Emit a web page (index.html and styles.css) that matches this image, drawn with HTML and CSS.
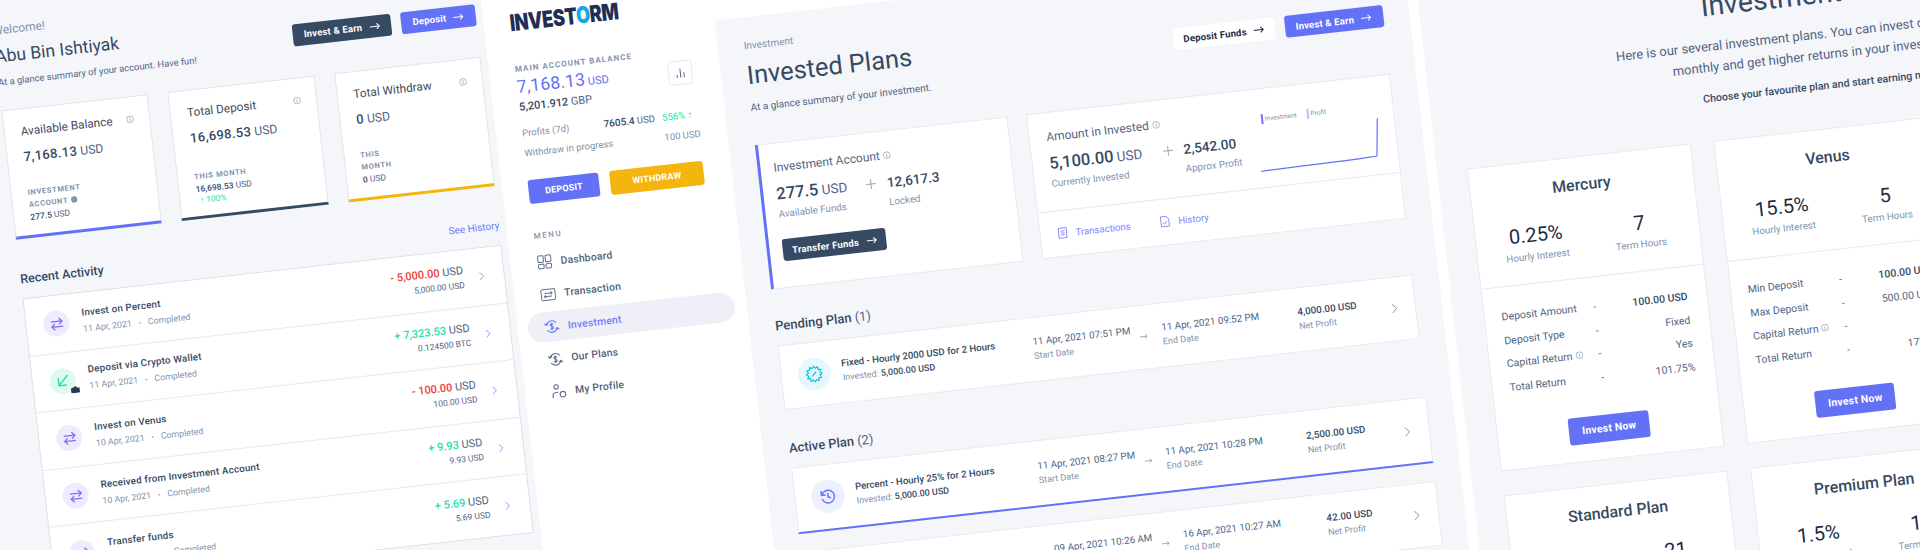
FILE: index.html
```html
<!DOCTYPE html>
<html lang="en">
<head>
<meta charset="utf-8">
<title>Investorm</title>
<link rel="stylesheet" href="styles.css">
</head>
<body>
<svg class="defs" width="0" height="0" aria-hidden="true">
  <symbol id="i-arrow" viewBox="0 0 12 8"><path d="M.5 4h10.5M8 1l3 3-3 3" fill="none" stroke="currentColor" stroke-width="1.1"/></symbol>
  <symbol id="i-info" viewBox="0 0 10 10"><circle cx="5" cy="5" r="4.2" fill="none" stroke="currentColor" stroke-width=".8"/><path d="M5 4.4v3M5 2.6v1" stroke="currentColor" stroke-width=".9"/></symbol>
  <symbol id="i-chev" viewBox="0 0 8 12"><path d="M1.5 1l5 5-5 5" fill="none" stroke="currentColor" stroke-width="1"/></symbol>
  <symbol id="i-swap" viewBox="0 0 14 14"><path d="M1.5 4.5h10.5M9 1.5l3 3-3 3M12.5 9.5H2M5 6.500l-3 3 3 3" fill="none" stroke="currentColor" stroke-width="1.200"/></symbol>
  <symbol id="i-money" viewBox="0 0 16 16"><path d="M2.600 6.200A5.800 5.800 0 0 1 12.800 4.600M13.400 9.800A5.800 5.800 0 0 1 3.200 11.400M.8 4.400l1.900 2 2-1.600M15.200 11.600l-1.900-2-2 1.600M9.600 5.900C9 5.200 6.700 5 6.600 6.500S9.700 7.700 9.600 9.300 7 10.800 6.300 10M8 4.300v7.400" fill="none" stroke="currentColor" stroke-width="1.100"/></symbol>
  <symbol id="i-clock" viewBox="0 0 16 16"><path d="M2 2.500v4h4M2.400 6.400A6 6 0 1 1 2.300 10M8 4.800v3.700l2.600 1.200" fill="none" stroke="currentColor" stroke-width="1.400"/></symbol>
</svg>

<div class="stage">

  <section class="dash">
    <header class="head">
      <div>
        <p class="muted-line">Welcome!</p>
        <h1 class="name">Abu Bin Ishtiyak</h1>
        <p class="summary">At a glance summary of your account. Have fun!</p>
      </div>
      <div class="actions">
        <a class="btn btn-dark btn-head">Invest &amp; Earn <svg class="btn-arrow"><use href="#i-arrow"/></svg></a>
        <a class="btn btn-blue btn-dep">Deposit <svg class="btn-arrow"><use href="#i-arrow"/></svg></a>
      </div>
    </header>

    <div class="tiles">
      <article class="tile tile-blue">
        <div class="tile-top"><h3>Available Balance</h3><svg class="tile-info"><use href="#i-info"/></svg></div>
        <p class="tile-val"><b>7,168.13</b> USD</p>
        <div class="tile-foot">
          <p class="tile-label narrow">Investment<br>Account <svg class="dot-info" viewBox="0 0 8 8"><circle cx="4" cy="4" r="3.600" fill="#8094ae"/></svg></p>
          <p class="tile-sub"><b>277.5</b> USD</p>
        </div>
      </article>
      <article class="tile tile-dark">
        <div class="tile-top"><h3>Total Deposit</h3><svg class="tile-info"><use href="#i-info"/></svg></div>
        <p class="tile-val"><b>16,698.53</b> USD</p>
        <div class="tile-foot">
          <p class="tile-label">This Month</p>
          <p class="tile-sub"><b>16,698.53</b> USD</p>
          <p class="tile-pct">↑ 100%</p>
        </div>
      </article>
      <article class="tile tile-yellow">
        <div class="tile-top"><h3>Total Withdraw</h3><svg class="tile-info"><use href="#i-info"/></svg></div>
        <p class="tile-val"><b>0</b> USD</p>
        <div class="tile-foot">
          <p class="tile-label">This<br>Month</p>
          <p class="tile-sub"><b>0</b> USD</p>
        </div>
      </article>
    </div>

    <div class="section-head">
      <h2>Recent Activity</h2>
      <a class="see">See History</a>
    </div>

    <div class="activity">
      <div class="act">
        <span class="ico ico-purple"><svg><use href="#i-swap"/></svg></span>
        <div class="act-main"><h4>Invest on Percent</h4><p>11 Apr, 2021<i>•</i><span>Completed</span></p></div>
        <div class="act-amt"><p class="amt"><b class="neg">- 5,000.00</b> USD</p><p class="amt-sub">5,000.00 USD</p></div>
        <svg class="act-chev"><use href="#i-chev"/></svg>
      </div>
      <div class="act">
        <span class="ico ico-green">
          <svg viewBox="0 0 14 14"><path d="M11.500 2L2.500 11M2.500 4v7.200h7.200" fill="none" stroke="currentColor" stroke-width="1.300"/></svg>
          <svg class="wallet" viewBox="0 0 10 8"><path d="M0 2.500L6 0l1 2h3v6H0z" fill="#2c3a52"/></svg>
        </span>
        <div class="act-main"><h4>Deposit via Crypto Wallet</h4><p>11 Apr, 2021<i>•</i><span>Completed</span></p></div>
        <div class="act-amt"><p class="amt"><b class="pos">+ 7,323.53</b> USD</p><p class="amt-sub">0.124500 BTC</p></div>
        <svg class="act-chev"><use href="#i-chev"/></svg>
      </div>
      <div class="act">
        <span class="ico ico-purple"><svg><use href="#i-swap"/></svg></span>
        <div class="act-main"><h4>Invest on Venus</h4><p>10 Apr, 2021<i>•</i><span>Completed</span></p></div>
        <div class="act-amt"><p class="amt"><b class="neg">- 100.00</b> USD</p><p class="amt-sub">100.00 USD</p></div>
        <svg class="act-chev"><use href="#i-chev"/></svg>
      </div>
      <div class="act">
        <span class="ico ico-purple"><svg><use href="#i-swap"/></svg></span>
        <div class="act-main"><h4>Received from Investment Account</h4><p>10 Apr, 2021<i>•</i><span>Completed</span></p></div>
        <div class="act-amt"><p class="amt"><b class="pos">+ 9.93</b> USD</p><p class="amt-sub">9.93 USD</p></div>
        <svg class="act-chev"><use href="#i-chev"/></svg>
      </div>
      <div class="act">
        <span class="ico ico-purple"><svg><use href="#i-swap"/></svg></span>
        <div class="act-main"><h4>Transfer funds</h4><p>10 Apr, 2021<i>•</i><span>Completed</span></p></div>
        <div class="act-amt"><p class="amt"><b class="pos">+ 5.69</b> USD</p><p class="amt-sub">5.69 USD</p></div>
        <svg class="act-chev"><use href="#i-chev"/></svg>
      </div>
    </div>
  </section>

  <aside class="side">
    <div class="logo"><span class="logo-word">INVEST<em>O</em>RM</span></div>
    <div class="bal">
      <div>
        <p class="bal-label">Main Account Balance</p>
        <p class="bal-main"><b>7,168.13</b> USD</p>
        <p class="bal-alt"><b>5,201.912</b> GBP</p>
      </div>
      <span class="bal-btn"><svg viewBox="0 0 12 12"><path d="M2.500 11V8M6 11V2M9.500 11V6" fill="none" stroke="#526484" stroke-width="1"/></svg></span>
    </div>
    <div class="bal-row bal-row-first">
      <span class="soft">Profits (7d)</span>
      <span class="profit"><b>7605.4</b> USD</span>
      <span class="gain">556% ↑</span>
    </div>
    <div class="bal-row">
      <span class="soft">Withdraw in progress</span>
      <span></span>
      <span class="soft right">100 USD</span>
    </div>
    <div class="side-btns">
      <a class="btn btn-blue btn-side btn-side-dep">Deposit</a>
      <a class="btn btn-yellow btn-side btn-side-wd">Withdraw</a>
    </div>
    <p class="menu-title">Menu</p>
    <nav class="menu">
      <a class="item">
        <svg viewBox="0 0 16 16"><g fill="none" stroke="currentColor" stroke-width="1"><rect x="1.500" y="1.500" width="5.500" height="6.500" rx="1"/><rect x="9" y="1.500" width="5.500" height="6.500" rx="1"/><rect x="1.500" y="10" width="5.500" height="4.500" rx="1"/><rect x="9" y="10" width="5.500" height="4.500" rx="1"/></g></svg>
        Dashboard</a>
      <a class="item">
        <svg viewBox="0 0 16 16"><g fill="none" stroke="currentColor" stroke-width="1"><rect x="1" y="2.500" width="14" height="11" rx="1.500"/><path d="M4.500 6.500h7.500M10.500 5l1.500 1.500L10.500 8M11.500 9.700H4M5.500 8.200L4 9.700l1.500 1.500"/></g></svg>
        Transaction</a>
      <a class="item item-on"><svg><use href="#i-money"/></svg>Investment</a>
      <a class="item"><svg><use href="#i-money"/></svg>Our Plans</a>
      <a class="item">
        <svg viewBox="0 0 16 16"><g fill="none" stroke="currentColor" stroke-width="1.100"><circle cx="5.500" cy="3.500" r="2.200"/><path d="M1.500 14.500v-2A3.500 3.500 0 0 1 5 9h2"/><circle cx="11.500" cy="11.500" r="2.800"/></g></svg>
        My Profile</a>
    </nav>
  </aside>

  <main class="plans">
    <div class="topbar"></div>
    <div class="plans-body">
      <header class="head">
        <div>
          <p class="crumb">Investment</p>
          <h1 class="title">Invested Plans</h1>
          <p class="title-sub">At a glance summary of your investment.</p>
        </div>
        <div class="actions actions-plans">
          <a class="btn btn-white btn-funds">Deposit Funds <svg class="btn-arrow"><use href="#i-arrow"/></svg></a>
          <a class="btn btn-blue btn-head">Invest &amp; Earn <svg class="btn-arrow"><use href="#i-arrow"/></svg></a>
        </div>
      </header>

      <div class="summary-cards">
        <article class="sum sum-account">
          <h3 class="sum-title">Investment Account <svg class="mini-info"><use href="#i-info"/></svg></h3>
          <div class="sum-stats">
            <div class="stat stat-a"><p class="big"><b>277.5</b> USD</p><p class="cap">Available Funds</p></div>
            <svg class="plus" viewBox="0 0 10 10"><path d="M5 0v10M0 5h10" stroke="#8094ae" stroke-width=".8"/></svg>
            <div class="stat"><p class="big big-sm"><b>12,617.3</b></p><p class="cap">Locked</p></div>
          </div>
          <a class="btn btn-dark btn-transfer">Transfer Funds <svg class="btn-arrow"><use href="#i-arrow"/></svg></a>
        </article>
        <article class="sum sum-amount">
          <div class="sum-upper">
            <div>
              <h3 class="sum-title">Amount in Invested <svg class="mini-info"><use href="#i-info"/></svg></h3>
              <div class="sum-stats">
                <div class="stat stat-b"><p class="big"><b>5,100.00</b> USD</p><p class="cap">Currently Invested</p></div>
                <svg class="plus" viewBox="0 0 10 10"><path d="M5 0v10M0 5h10" stroke="#8094ae" stroke-width=".8"/></svg>
                <div class="stat"><p class="big big-sm"><b>2,542.00</b></p><p class="cap">Approx Profit</p></div>
              </div>
            </div>
            <div class="mini-chart">
              <div class="legend"><span class="leg leg-a">Investment</span><span class="leg leg-b">Profit</span></div>
              <svg class="line" viewBox="0 0 124 46"><path d="M1 45C30 44 60 44 90 43.500c15-.3 24-1 28-1L122.500 5" fill="none" stroke="#6271f5" stroke-width="1.200"/></svg>
            </div>
          </div>
          <div class="sum-links">
            <a class="tool"><svg viewBox="0 0 10 12"><path d="M1 1h8v10H1zM3 4h4M3 6h4M3 8h4" fill="none" stroke="currentColor" stroke-width=".9"/></svg>Transactions</a>
            <a class="tool"><svg viewBox="0 0 10 12"><path d="M1 1h5.500L9 3.500V11H1zM3 7l1.500 1.500L7 5.500" fill="none" stroke="currentColor" stroke-width=".9"/></svg>History</a>
          </div>
        </article>
      </div>

      <h2 class="plan-head plan-head-pending">Pending Plan <span>(1)</span></h2>
      <div class="plan plan-p">
        <span class="pico pico-cyan"><svg viewBox="0 0 16 16"><path d="M15.500 8L13.410 9.450 14.500 11.750 11.960 11.960 11.750 14.500 9.450 13.410 8 15.500 6.550 13.410 4.250 14.500 4.040 11.960 1.500 11.750 2.590 9.450.5 8 2.590 6.550 1.500 4.250 4.040 4.040 4.250 1.500 6.550 2.590 8 .5 9.450 2.590 11.750 1.500 11.960 4.040 14.500 4.250 13.410 6.550z" fill="none" stroke="currentColor" stroke-width="1.100"/><path d="M6 10l4-4M6 6h.1M10 10h.1" stroke="currentColor" stroke-width="1.200"/></svg></span>
        <div class="plan-name"><h4>Fixed - Hourly 2000 USD for 2 Hours</h4><p>Invested: <b>5,000.00 USD</b></p></div>
        <div class="plan-col"><h5>11 Apr, 2021 07:51 PM</h5><p>Start Date</p></div>
        <svg class="plan-arrow"><use href="#i-arrow"/></svg>
        <div class="plan-col"><h5>11 Apr, 2021 09:52 PM</h5><p>End Date</p></div>
        <div class="plan-col"><h5 class="net">4,000.00 USD</h5><p>Net Profit</p></div>
        <svg class="plan-chev"><use href="#i-chev"/></svg>
      </div>

      <h2 class="plan-head plan-head-active">Active Plan <span>(2)</span></h2>
      <div class="plan plan-a">
        <span class="pico pico-blue"><svg><use href="#i-clock"/></svg></span>
        <div class="plan-name"><h4>Percent - Hourly 25% for 2 Hours</h4><p>Invested: <b>5,000.00 USD</b></p></div>
        <div class="plan-col"><h5>11 Apr, 2021 08:27 PM</h5><p>Start Date</p></div>
        <svg class="plan-arrow"><use href="#i-arrow"/></svg>
        <div class="plan-col"><h5>11 Apr, 2021 10:28 PM</h5><p>End Date</p></div>
        <div class="plan-col"><h5 class="net">2,500.00 USD</h5><p>Net Profit</p></div>
        <svg class="plan-chev"><use href="#i-chev"/></svg>
      </div>
      <div class="plan plan-c">
        <span class="pico pico-blue"><svg><use href="#i-clock"/></svg></span>
        <div class="plan-name"><h4>Mercury - Hourly 0.25% for 7 Hours</h4><p>Invested: <b>100.00 USD</b></p></div>
        <div class="plan-col"><h5>09 Apr, 2021 10:26 AM</h5><p>Start Date</p></div>
        <svg class="plan-arrow"><use href="#i-arrow"/></svg>
        <div class="plan-col"><h5>16 Apr, 2021 10:27 AM</h5><p>End Date</p></div>
        <div class="plan-col"><h5 class="net">42.00 USD</h5><p>Net Profit</p></div>
        <svg class="plan-chev"><use href="#i-chev"/></svg>
      </div>
    </div>
  </main>

  <div class="strip"></div>

  <section class="catalog">
    <header class="cat-head">
      <h1>Investment Plans</h1>
      <p class="cat-lead">Here is our several investment plans. You can invest daily, weekly and<br>monthly and get higher returns in your investment.</p>
      <p class="cat-call">Choose your favourite plan and start earning now.</p>
    </header>
    <div class="cat-grid">
      <article class="pcard">
        <div class="pcard-top">
          <h3>Mercury</h3>
          <div class="pcard-stats">
            <div><p class="num">0.25%</p><p class="lbl">Hourly Interest</p></div>
            <div><p class="num">7</p><p class="lbl">Term Hours</p></div>
          </div>
        </div>
        <dl class="pcard-rows">
          <div><dt>Deposit Amount</dt><i>-</i><dd class="strong">100.00 USD</dd></div>
          <div><dt>Deposit Type</dt><i>-</i><dd>Fixed</dd></div>
          <div><dt>Capital Return <svg class="mini-info"><use href="#i-info"/></svg></dt><i>-</i><dd>Yes</dd></div>
          <div><dt>Total Return</dt><i>-</i><dd>101.75%</dd></div>
        </dl>
        <a class="btn btn-blue btn-now">Invest Now</a>
      </article>
      <article class="pcard">
        <div class="pcard-top">
          <h3>Venus</h3>
          <div class="pcard-stats">
            <div><p class="num">15.5%</p><p class="lbl">Hourly Interest</p></div>
            <div><p class="num">5</p><p class="lbl">Term Hours</p></div>
          </div>
        </div>
        <dl class="pcard-rows">
          <div><dt>Min Deposit</dt><i>-</i><dd class="strong">100.00 USD</dd></div>
          <div><dt>Max Deposit</dt><i>-</i><dd>500.00 USD</dd></div>
          <div><dt>Capital Return <svg class="mini-info"><use href="#i-info"/></svg></dt><i>-</i><dd>Yes</dd></div>
          <div><dt>Total Return</dt><i>-</i><dd>177.5%</dd></div>
        </dl>
        <a class="btn btn-blue btn-now">Invest Now</a>
      </article>
      <article class="pcard">
        <div class="pcard-top">
          <h3>Standard Plan</h3>
          <div class="pcard-stats">
            <div><p class="num">1%</p><p class="lbl">Hourly Interest</p></div>
            <div><p class="num">21</p><p class="lbl">Term Hours</p></div>
          </div>
        </div>
      </article>
      <article class="pcard">
        <div class="pcard-top">
          <h3>Premium Plan</h3>
          <div class="pcard-stats">
            <div><p class="num">1.5%</p><p class="lbl">Hourly Interest</p></div>
            <div><p class="num">14</p><p class="lbl">Term Hours</p></div>
          </div>
        </div>
      </article>
    </div>
  </section>
</div>
</body>
</html>
```
FILE: styles.css
```css
* { box-sizing: border-box; }
html, body { margin: 0; width: 1920px; height: 550px; overflow: hidden; background: #f5f6fa; }
body { font-family: Roboto, "Liberation Sans", sans-serif; color: #526484; font-size: 10px; }
p, h1, h2, h3, h4, h5, dl, dd, dt { margin: 0; font-weight: 400; }
.defs { display: block; height: 0; }
b { font-weight: 500; }
i { font-style: normal; }

.stage {
  display: flex;
  width: 2260px;
  height: 900px;
  transform-origin: 0 0;
  transform: rotate(-6.4deg) translate(-70px, -10px);
  background: #f5f6fa;
}

/* shared buttons */
.btn { display: inline-flex; align-items: center; justify-content: center; border-radius: 3px; color: #fff; font-weight: 700; letter-spacing: .02em; white-space: nowrap; }
.btn-blue { background: #6271f5; }
.btn-dark { background: #364a63; }
.btn-yellow { background: #f4b50e; }
.btn-white { background: #fff; color: #1c2b46; }
.btn-arrow { width: 11px; height: 8px; margin-left: 7px; }
.head { display: flex; justify-content: space-between; align-items: flex-start; }
.actions { display: flex; gap: 10px; margin-top: 36.500px; }
.btn-head { width: 99px; height: 22px; font-size: 9.500px; }
.btn-dep { width: 75px; height: 22px; font-size: 9.500px; }

/* left dashboard */
.dash { flex: 0 0 548px; padding: 30px 7px 0 59px; }
.muted-line { font-size: 12px; line-height: 20px; color: #8094ae; }
.name { font-size: 17.500px; line-height: 32px; color: #364a63; }
.summary { font-size: 9.400px; line-height: 20px; color: #526484; }
.tiles { display: flex; gap: 20px; margin-top: 18px; }
.tile { flex: 1; height: 130px; background: #fff; border: 1px solid #dfe3ec; border-bottom-width: 3px; padding: 14px 15px 11px 16px; display: flex; flex-direction: column; }
.tile-blue { border-bottom-color: #6271f5; }
.tile-dark { border-bottom-color: #364a63; }
.tile-yellow { border-bottom-color: #f4b50e; }
.tile-top { display: flex; justify-content: space-between; align-items: center; height: 16px; }
.tile-top h3 { font-size: 11.800px; color: #3c4d62; }
.tile-info { width: 8px; height: 8px; color: #8094ae; }
.tile-val { font-size: 12.200px; line-height: 16px; margin-top: 10px; color: #526484; }
.tile-val b { font-size: 13px; letter-spacing: .03em; color: #364a63; }
.tile-foot { margin-top: auto; }
.tile-label { font-size: 7.500px; line-height: 12px; font-weight: 700; letter-spacing: .09em; text-transform: uppercase; color: #8094ae; }
.tile-label.narrow { width: 70px; }
.dot-info { width: 7px; height: 7px; vertical-align: -1px; }
.tile-sub { font-size: 8.500px; line-height: 13px; color: #526484; }
.tile-sub b { color: #364a63; }
.tile-pct { font-size: 8.500px; line-height: 9px; color: #1ee0ac; padding-left: 3px; }
.section-head { display: flex; justify-content: space-between; align-items: center; height: 22px; margin-top: 28px; }
.section-head h2 { font-size: 12.500px; font-weight: 500; color: #364a63; }
.see { font-size: 10px; color: #6f7cf7; }
.activity { margin-top: 9px; background: #fff; border: 1px solid #dbdfea; }
.act { display: flex; align-items: center; height: 57.600px; padding: 0 19px 0 17px; border-bottom: 1px solid #e5e9f2; }
.act:last-child { border-bottom: 0; }
.ico { flex: 0 0 26px; height: 26px; border-radius: 50%; display: flex; align-items: center; justify-content: center; position: relative; margin-right: 13px; }
.ico svg { width: 15px; height: 15px; }
.ico-purple { background: #efebff; color: #816bff; }
.ico-green { background: #def9f0; color: #1ee0ac; }
.ico .wallet { position: absolute; right: -3px; bottom: 0; width: 9px; height: 7px; }
.act-main h4 { font-size: 9.800px; line-height: 16px; font-weight: 500; letter-spacing: .02em; color: #364a63; white-space: nowrap; }
.act-main p { font-size: 8.800px; line-height: 16px; color: #8094ae; }
.act-main i { margin: 0 7px; font-size: 7px; }
.act-amt { margin-left: auto; text-align: right; margin-right: 15px; }
.amt { font-size: 11px; line-height: 15px; color: #526484; }
.amt b { font-weight: 500; }
.neg { color: #f0403a; }
.pos { color: #1ee0ac; }
.amt-sub { font-size: 8.500px; line-height: 15px; color: #526484; }
.act-chev { width: 6px; height: 10px; color: #7c87f8; }

/* sidebar */
.side { flex: 0 0 230px; background: #fff; padding: 81px 28px 0 26px; }
.logo { height: 18px; display: flex; align-items: center; }
.logo-word { font-family: Inter, sans-serif; font-weight: 900; font-size: 23px; color: #1f2f54; transform: scaleX(.79); transform-origin: 0 50%; letter-spacing: -.02em; }
.logo-word em { font-style: normal; color: #17a8e3; }
.bal { display: flex; justify-content: space-between; align-items: flex-start; margin-top: 32px; }
.bal-label { font-size: 8px; line-height: 12px; font-weight: 700; letter-spacing: .13em; text-transform: uppercase; color: #8094ae; }
.bal-main { height: 22px; font-size: 11px; line-height: 22px; color: #6271f5; }
.bal-main b { font-size: 17.500px; line-height: 22px; font-weight: 400; letter-spacing: .01em; }
.bal-alt { font-size: 11px; line-height: 20px; color: #526484; }
.bal-alt b { font-weight: 500; color: #364a63; font-size: 11px; }
.bal-btn { flex: 0 0 24px; height: 24px; margin-top: 15px; border: 1px solid #e5e9f2; border-radius: 2px; display: flex; align-items: center; justify-content: center; }
.bal-btn svg { width: 12px; height: 12px; }
.bal-row { display: grid; grid-template-columns: 82px 59px 35px; line-height: 20px; font-size: 9.500px; white-space: nowrap; }
.bal-row-first { margin-top: 6px; }
.soft { color: #8094ae; }
.right { text-align: right; }
.profit { color: #526484; }
.profit b { color: #364a63; font-size: 10px; }
.gain { color: #1ee0ac; font-size: 9.500px; }
.side-btns { display: flex; gap: 11px; margin-top: 16.500px; }
.btn-side { height: 24px; font-size: 9px; text-transform: uppercase; }
.btn-side-dep { width: 71px; }
.btn-side-wd { width: 94px; }
.menu-title { margin-top: 27px; font-size: 8px; line-height: 12px; font-weight: 500; letter-spacing: .2em; text-transform: uppercase; color: #8094ae; }
.menu { margin: 5.500px -16px 0 -16.500px; display: flex; flex-direction: column; gap: 2.500px; }
.item { display: flex; align-items: center; gap: 8px; height: 30px; padding-left: 16.500px; border-radius: 15px; font-size: 10.400px; font-weight: 500; letter-spacing: .02em; color: #4f5f79; }
.item svg { width: 16px; height: 16px; color: #5e6f89; }
.item-on { background: #eff0f7; color: #6f7cf7; }
.item-on svg { color: #6f7cf7; }

/* invested plans */
.plans { flex: 0 0 691px; }
.topbar { height: 110px; background: #fff; }
.plans-body { padding: 21px 26.500px 0 26px; }
.crumb { font-size: 10px; line-height: 16px; color: #8094ae; }
.title { font-size: 25.500px; font-weight: 400; line-height: 36px; margin-top: 3px; color: #364a63; }
.title-sub { font-size: 10px; line-height: 14px; margin-top: 8px; }
.actions-plans { margin-top: 38px; }
.btn-funds { width: 102px; height: 22px; font-size: 9.500px; }
.summary-cards { display: flex; gap: 19px; margin-top: 30px; }
.sum { background: #fff; border: 1px solid #e5e9f2; height: 145.500px; }
.sum-account { flex: 0 0 254px; border-left: 3px solid #6271f5; padding: 16px 0 0 13px; }
.sum-amount { flex: 1; }
.sum-upper { display: flex; height: 99px; padding: 16px 15px 0 16.500px; border-bottom: 1px solid #e5e9f2; }
.sum-title { font-size: 12px; line-height: 16px; color: #526484; }
.mini-info { width: 8px; height: 8px; color: #8094ae; vertical-align: 0; }
.sum-stats { display: flex; align-items: flex-start; margin-top: 9px; }
.stat-a { flex: 0 0 90px; }
.stat-b { flex: 0 0 114px; }
.plus { width: 10px; height: 10px; margin: 5px 11px 0 0; }
.big { font-size: 13.500px; line-height: 20px; white-space: nowrap; color: #526484; }
.big b { font-size: 16.500px; color: #364a63; }
.big-sm b { font-size: 13.500px; }
.cap { font-size: 9.800px; line-height: 14px; margin-top: 3px; color: #8094ae; white-space: nowrap; }
.btn-transfer { width: 104px; height: 22px; font-size: 9.500px; margin-top: 18px; }
.mini-chart { margin-left: auto; width: 124px; margin-top: 9px; }
.legend { display: flex; gap: 10px; height: 12px; padding-left: 7px; font-size: 6.500px; color: #8094ae; }
.leg { border-left: 2px solid #816bff; padding-left: 2px; line-height: 10px; height: 10px; }
.leg-b { border-left-color: #b9befb; }
.line { display: block; width: 124px; height: 46px; }
.sum-links { display: flex; align-items: center; gap: 30px; height: 44px; padding-left: 17px; }
.tool { display: flex; align-items: center; gap: 8px; font-size: 9.600px; color: #7c87f8; }
.tool svg { width: 10px; height: 12px; }
.plan-head { font-size: 13px; font-weight: 500; line-height: 18px; color: #364a63; }
.plan-head span { font-weight: 400; color: #526484; }
.plan-head-pending { margin-top: 28px; }
.plan-head-active { margin-top: 29.500px; }
.plan { display: grid; align-items: center; height: 65.500px; margin-top: 10px; padding-left: 16px; background: #fff; border: 1px solid #e5e9f2; }
.plan-p { grid-template-columns: 44.500px 192.500px 107px 22.600px 137px 92px 8px; }
.plan-a { grid-template-columns: 44.500px 183.400px 107px 21.600px 142px 97px 8px; border-bottom: 2px solid #6271f5; height: 67px; }
.plan-c { grid-template-columns: 44.500px 191px 107px 22.400px 144.600px 86px 8px; margin-top: 18px; }
.pico { width: 33px; height: 33px; border-radius: 50%; display: flex; align-items: center; justify-content: center; }
.pico svg { width: 17px; height: 17px; }
.pico-cyan { background: #e6f8fb; color: #09c2de; }
.pico-blue { background: #eff0ff; color: #6576ff; }
.plan-name h4 { font-size: 9.600px; font-weight: 500; line-height: 14px; color: #364a63; white-space: nowrap; }
.plan-name p { font-size: 9px; line-height: 14px; color: #8094ae; white-space: nowrap; }
.plan-name b { color: #364a63; }
.plan-col h5 { font-size: 9.800px; line-height: 14px; color: #526484; white-space: nowrap; }
.plan-col .net { font-weight: 500; color: #364a63; }
.plan-col p { font-size: 9px; line-height: 14px; color: #8094ae; }
.plan-arrow { width: 8px; height: 6px; color: #8094ae; }
.plan-chev { width: 7px; height: 12px; color: #8094ae; margin-left: 1px; }

.strip { flex: 0 0 10px; background: #fff; }

/* plan catalog */
.catalog { flex: 0 0 780px; padding: 189px 0 0 30px; }
.cat-head { text-align: center; margin-right: 30px; }
.cat-head h1 { font-size: 28.500px; font-weight: 400; line-height: 36px; color: #364a63; }
.cat-lead { font-size: 13px; line-height: 21px; margin-top: 11px; color: #526484; }
.cat-call { font-size: 10.600px; font-weight: 500; line-height: 16px; margin-top: 13px; color: #364a63; }
.cat-grid { display: grid; grid-template-columns: repeat(2, 225px); column-gap: 22.600px; row-gap: 23.500px; margin-top: 34px; }
.pcard { background: #fff; border: 1px solid #e5e9f2; height: 305px; text-align: center; }
.pcard-top { height: 121px; padding: 16px 9px 0 8px; border-bottom: 1px solid #e5e9f2; }
.pcard-top h3 { font-size: 16px; font-weight: 500; line-height: 24px; color: #364a63; }
.pcard-stats { display: grid; grid-template-columns: 104px 104px; margin-top: 19px; }
.num { font-size: 20px; line-height: 26px; color: #1c2b46; }
.lbl { font-size: 9.800px; line-height: 14px; margin-top: 2.400px; color: #8094ae; }
.pcard-rows { padding: 18px 19px 0 17px; }
.pcard-rows div { display: grid; grid-template-columns: 1fr auto 1fr; align-items: center; height: 23.500px; text-align: left; font-size: 10.500px; }
.pcard-rows dd { text-align: right; }
.pcard-rows .strong { font-weight: 500; color: #364a63; }
.pcard-rows i { color: #526484; }
.btn-now { width: 80.500px; height: 27px; margin-top: 26px; font-size: 10.500px; }
```
